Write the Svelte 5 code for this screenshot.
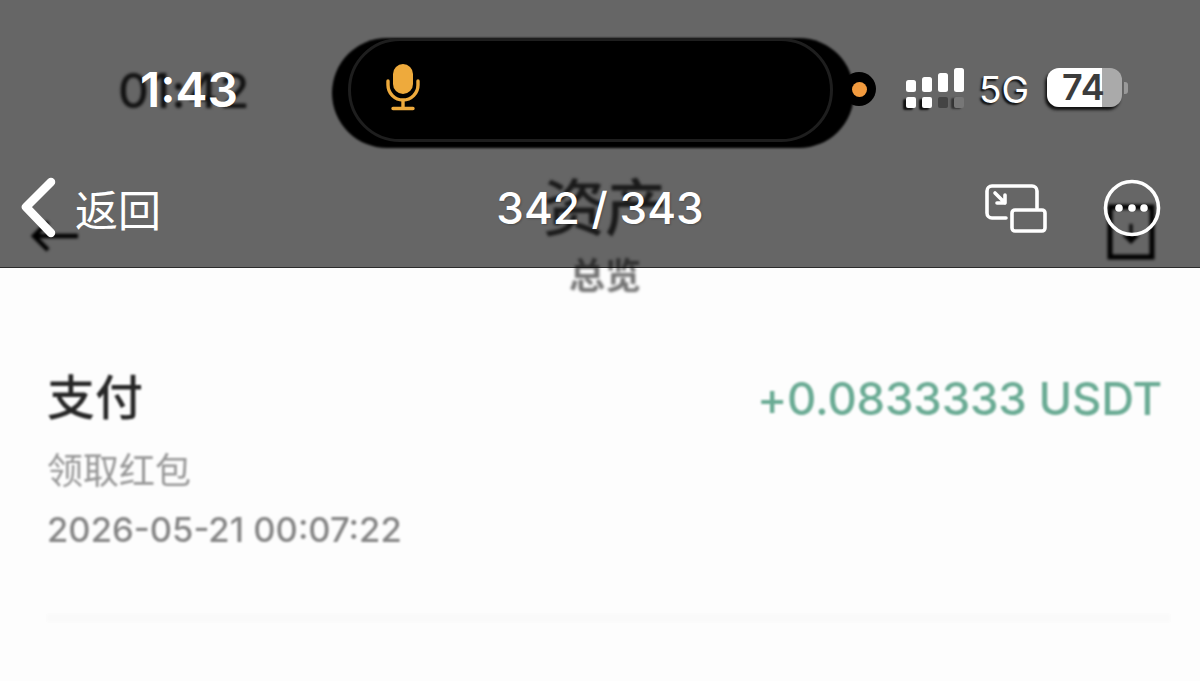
<script>
  const bars = [
    { h: 12 },
    { h: 15 },
    { h: 19 },
    { h: 24 }
  ];
</script>

<div class="page">
  <header class="header">
    <div class="ghost time-ghost">01:42</div>
    <div class="ghost signal-ghost">
      <i class="sg w"></i><i class="sg w"></i><i class="sg d"></i><i class="sg l"></i>
    </div>
    <div class="ghost title-ghost">资产</div>
    <div class="ghost sub-ghost">总览</div>
    <svg class="ghost arrow-ghost" viewBox="0 0 50 34" fill="none" stroke="#000" stroke-width="4.5">
      <path d="M48 18H4M18 4 4 18l14 14" />
    </svg>
    <svg class="ghost cal-ghost" viewBox="0 0 48 56" fill="none" stroke="#000" stroke-width="5">
      <path d="M3 3v50h42V3z" />
      <path d="M24 20v18" stroke-width="3" />
      <path d="M15 31h18l-9 9z" fill="#000" stroke="none" />
    </svg>

    <div class="status">
      <div class="time">1:43</div>
      <div class="island">
        <div class="island-back"></div>
        <div class="island-inner">
          <svg class="mic" width="34" height="48" viewBox="0 0 34 48" fill="none" stroke="#eeaa3c" stroke-width="3.4" stroke-linecap="round">
            <rect x="7" y="1" width="20" height="30" rx="10" fill="#eeaa3c" stroke="none" />
            <path d="M2 18v4a15 15 0 0 0 30 0v-4M17 37v8M7 45.5h20" />
          </svg>
        </div>
        <div class="dot-wrap"><span class="dot"></span></div>
      </div>
      <div class="indicators">
        <div class="signal">
          {#each bars as b}
            <span class="bar" style="height:{b.h}px"></span>
          {/each}
        </div>
        <span class="net">5G</span>
        <div class="battery">
          <span class="batt-text">74</span>
        </div>
        <span class="nub"></span>
      </div>
    </div>

    <nav class="nav">
      <div class="back">
        <svg width="40" height="62" viewBox="0 0 40 62" fill="none" stroke="#fff" stroke-width="8.5" stroke-linecap="round" stroke-linejoin="round">
          <path d="M30 5 5 30l25 26" />
        </svg>
        <span class="back-text">返回</span>
      </div>
      <div class="counter">342 / 343</div>
      <div class="actions">
        <svg width="62" height="50" viewBox="0 0 62 50" fill="none" stroke="#fff" stroke-width="3.6" stroke-linecap="round" stroke-linejoin="round">
          <path d="M52 25V8a5 5 0 0 0-5-5H7a5 5 0 0 0-5 5v22a5 5 0 0 0 5 5h14" />
          <rect x="27" y="27" width="33" height="21" rx="3" />
          <path d="M10 10 20 20M20 12v8h-8" />
        </svg>
        <svg width="60" height="60" viewBox="0 0 60 60" fill="none">
          <circle cx="30" cy="30" r="26.5" stroke="#fff" stroke-width="3.6" />
          <circle cx="17" cy="30" r="3.8" fill="#fff" />
          <circle cx="30" cy="30" r="3.8" fill="#fff" />
          <circle cx="42" cy="30" r="3.8" fill="#fff" />
        </svg>
      </div>
    </nav>
  </header>

  <main class="content">
    <div class="row">
      <div class="title">支付</div>
      <div class="amount">+0.0833333 USDT</div>
    </div>
    <div class="sub">领取红包</div>
    <div class="date">2026-05-21 00:07:22</div>
    <div class="divider"></div>
  </main>
</div>

<style>
  :global(body) {
    margin: 0;
    background: #fdfdfd;
  }
  .page {
    width: 1200px;
    height: 681px;
    overflow: hidden;
    position: relative;
    font-family: Inter, "Liberation Sans", "Noto Sans CJK SC", sans-serif;
  }
  .header {
    height: 267px;
    background: #666666;
    border-bottom: 1px solid #2c2c2c;
    display: flex;
    flex-direction: column;
    position: relative;
  }
  .ghost {
    position: absolute;
    filter: blur(1.4px);
    color: #000;
  }
  .time-ghost {
    left: 118px;
    top: 63px;
    font-size: 48px;
    font-weight: 500;
    color: #111;
    line-height: 56px;
    letter-spacing: 1.2px;
  }
  .signal-ghost {
    left: 906px;
    top: 97px;
    display: flex;
    gap: 6px;
    filter: blur(0.7px);
  }
  .sg {
    width: 10px;
    height: 11px;
    border-radius: 2px;
    box-shadow: -3px 2px 2px #111;
  }
  .sg.w { background: #fff; }
  .sg.d { background: #444; box-shadow: none; }
  .sg.l { background: #777; box-shadow: -3px 1px 2px #333; }
  .title-ghost {
    left: 543px;
    top: 160px;
    font-family: "Noto Sans CJK SC", sans-serif;
    font-size: 62px;
    line-height: 88px;
    font-weight: 500;
    color: #1a1a1a;
  }
  .sub-ghost {
    left: 569px;
    top: 248px;
    font-family: "Noto Sans CJK SC", sans-serif;
    font-size: 36px;
    line-height: 50px;
    font-weight: 700;
    color: rgba(0, 0, 0, 0.55);
  }
  .arrow-ghost {
    left: 30px;
    top: 218px;
    width: 50px;
    height: 34px;
  }
  .cal-ghost {
    left: 1107px;
    top: 204px;
    width: 48px;
    height: 56px;
  }
  .status {
    height: 150px;
    position: relative;
    flex: none;
  }
  .time {
    position: absolute;
    left: 140px;
    top: 62px;
    font-size: 48px;
    line-height: 56px;
    font-weight: 600;
    color: #fff;
  }
  .island {
    position: absolute;
    left: 332px;
    top: 38px;
    width: 545px;
    height: 110px;
  }
  .island-back {
    position: absolute;
    left: 0;
    top: 0;
    width: 522px;
    height: 110px;
    background: #000;
    border-radius: 55px;
    filter: blur(0.8px);
  }
  .island-inner {
    position: absolute;
    left: 16px;
    top: 0;
    width: 485px;
    height: 104px;
    box-sizing: border-box;
    background: #000;
    border: 3px solid #1e1e1e;
    border-radius: 52px;
    display: flex;
    align-items: center;
    padding-left: 35px;
  }
  .mic {
    margin-top: -7px;
  }
  .dot-wrap {
    position: absolute;
    left: 510px;
    top: 34px;
    width: 34px;
    height: 34px;
    border-radius: 50%;
    background: #000;
    display: flex;
    align-items: center;
    justify-content: center;
  }
  .dot {
    width: 15px;
    height: 15px;
    border-radius: 50%;
    background: #f19a3e;
  }
  .indicators {
    position: absolute;
    left: 906px;
    top: 68px;
    height: 40px;
    display: flex;
    align-items: flex-start;
  }
  .signal {
    display: flex;
    align-items: flex-end;
    gap: 6px;
    height: 24px;
    width: 73px;
  }
  .bar {
    width: 10px;
    background: #fff;
    border-radius: 2.5px;
  }
  .net {
    font-size: 37px;
    line-height: 40px;
    margin-top: 2px;
    color: #fff;
    width: 68px;
    text-shadow: -2px 2px 2px #111;
  }
  .battery {
    width: 75px;
    height: 39px;
    border-radius: 12px;
    background: linear-gradient(90deg, #fff 73%, #aaa 73%);
    box-shadow: -2px 3px 3px #111;
    display: flex;
    align-items: center;
    padding-left: 15px;
    box-sizing: border-box;
  }
  .batt-text {
    font-size: 36px;
    line-height: 39px;
    font-weight: 600;
    color: #3c3c3c;
  }
  .nub {
    width: 4px;
    height: 12px;
    margin: 14px 0 0 2px;
    border-radius: 0 3px 3px 0;
    background: #999;
  }
  .nav {
    position: relative;
    display: flex;
    justify-content: space-between;
    align-items: center;
    height: 115px;
    padding: 0 38px 0 21px;
  }
  .back {
    display: flex;
    align-items: center;
    gap: 14px;
  }
  .back-text {
    font-family: "Noto Sans CJK SC", sans-serif;
    font-size: 43px;
    line-height: 60px;
    font-weight: 400;
    color: #fff;
  }
  .counter {
    position: absolute;
    left: 0;
    right: 0;
    top: 28px;
    text-align: center;
    font-size: 44px;
    line-height: 60px;
    font-weight: 500;
    color: #fff;
    text-shadow: 1px 1px 2px rgba(0, 0, 0, 0.25);
  }
  .actions {
    display: flex;
    align-items: center;
    gap: 55px;
  }
  .content {
    padding: 96px 38px 0 47px;
    color: #222;
    filter: blur(0.9px);
  }
  .row {
    display: flex;
    justify-content: space-between;
    align-items: flex-start;
    height: 68px;
  }
  .title {
    font-family: "Noto Sans CJK SC", sans-serif;
    font-size: 48px;
    line-height: 60px;
    font-weight: 500;
    color: #262626;
  }
  .amount {
    font-size: 45.5px;
    line-height: 60px;
    font-weight: 500;
    letter-spacing: -0.2px;
    color: #6aab94;
    margin-top: 5px;
  }
  .sub {
    font-family: "Noto Sans CJK SC", sans-serif;
    font-size: 36px;
    line-height: 50px;
    margin-top: 11px;
    color: #969696;
  }
  .date {
    font-size: 34.6px;
    line-height: 44px;
    font-weight: 500;
    margin-top: 14px;
    color: #858585;
  }
  .divider {
    height: 8px;
    margin: 63px -8px 0 0;
    background: #fafafa;
  }
</style>
